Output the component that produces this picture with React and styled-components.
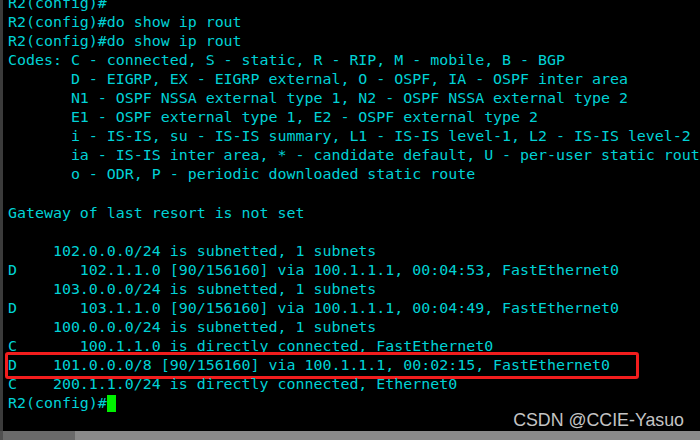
import React from 'react'
import styled, { createGlobalStyle } from 'styled-components'

const GlobalStyle = createGlobalStyle`
  html, body {
    margin: 0;
    padding: 0;
    background: #000;
    overflow: hidden;
  }
`

// 终端输出，一行一个
const lines = [
  'R2(config)#',
  'R2(config)#do show ip rout',
  'R2(config)#do show ip rout',
  'Codes: C - connected, S - static, R - RIP, M - mobile, B - BGP',
  '       D - EIGRP, EX - EIGRP external, O - OSPF, IA - OSPF inter area ',
  '       N1 - OSPF NSSA external type 1, N2 - OSPF NSSA external type 2',
  '       E1 - OSPF external type 1, E2 - OSPF external type 2',
  '       i - IS-IS, su - IS-IS summary, L1 - IS-IS level-1, L2 - IS-IS level-2',
  '       ia - IS-IS inter area, * - candidate default, U - per-user static route',
  '       o - ODR, P - periodic downloaded static route',
  '',
  'Gateway of last resort is not set',
  '',
  '     102.0.0.0/24 is subnetted, 1 subnets',
  'D       102.1.1.0 [90/156160] via 100.1.1.1, 00:04:53, FastEthernet0',
  '     103.0.0.0/24 is subnetted, 1 subnets',
  'D       103.1.1.0 [90/156160] via 100.1.1.1, 00:04:49, FastEthernet0',
  '     100.0.0.0/24 is subnetted, 1 subnets',
  'C       100.1.1.0 is directly connected, FastEthernet0',
  'D    101.0.0.0/8 [90/156160] via 100.1.1.1, 00:02:15, FastEthernet0',
  'C    200.1.1.0/24 is directly connected, Ethernet0',
]

const MARKED = 19 // 빨간 박스 친 줄

const App = () => {
  return (
    <>
      <GlobalStyle />
      <Screen>
        <Terminal>
          <Output>
            {lines.map((text, i) => (
              <Line key={i} $marked={i === MARKED}>{text}</Line>
            ))}
            <Line>R2(config)#<Cursor /></Line>
          </Output>
          <Watermark>CSDN @CCIE-Yasuo</Watermark>
        </Terminal>
        <ScrollBar>
          <Thumb />
        </ScrollBar>
      </Screen>
    </>
  )
}

export default App

const Screen = styled.div`
  width: 700px;
  height: 440px;
  display: flex;
  flex-direction: column;
  background: #000;
  overflow: hidden;
`

const Terminal = styled.div`
  position: relative;
  flex: 1;
  border-left: 3px solid #3b3b3b;
  padding-left: 5px;
  overflow: hidden;
`

const Output = styled.div`
  margin-top: -6px;
  font-family: "DejaVu Sans Mono", monospace;
  font-size: 14.93px;
  line-height: 19.05px;
  color: #00d2d6;
`

const Line = styled.div`
  position: relative;
  white-space: pre;
  height: 19.05px;

  ${props => props.$marked && `
    &::after {
      content: '';
      position: absolute;
      left: -3px;
      top: -4px;
      width: 634px;
      bottom: -4px;
      box-sizing: border-box;
      border: 3px solid #f21d1d;
      border-radius: 3px;
    }
  `}
`

const Cursor = styled.span`
  display: inline-block;
  width: 9px;
  height: 17px;
  vertical-align: -4px;
  background: #00f000;
`

const Watermark = styled.div`
  position: absolute;
  right: 16px;
  bottom: 0px;
  font-family: "Liberation Sans", Arial, sans-serif;
  font-size: 17.8px;
  color: #c4c4c4;
`

const ScrollBar = styled.div`
  height: 9px;
  display: flex;
  background: #8a8a8a;
  border-left: 3px solid #505050;
`

const Thumb = styled.div`
  width: 72px;
  background: #6a6a6a;
`
